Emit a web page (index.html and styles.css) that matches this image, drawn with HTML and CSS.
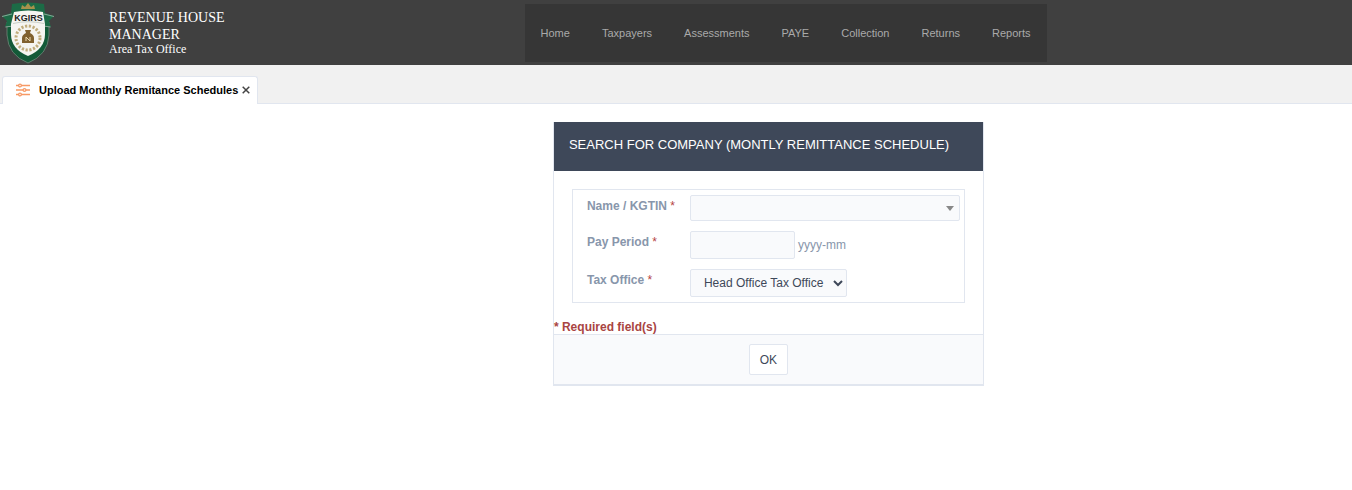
FILE: index.html
```html
<!DOCTYPE html>
<html lang="en">
<head>
<meta charset="utf-8">
<meta name="viewport" content="width=device-width, initial-scale=1">
<title>Upload Monthly Remitance Schedules</title>
<link rel="stylesheet" href="styles.css">
</head>
<body>
<header class="topbar">
  <div class="brand">
    <svg class="crest" viewBox="0 0 58 65" role="img" aria-label="KGIRS crest">
      <path d="M7 22 H49 V35 Q48 55 28 63 Q8 55 7 35Z" fill="#135a38" stroke="#71857a" stroke-width=".8"/>
      <path d="M12 4 Q28 1 44 4 L45 13 L54 16 L49 21 L51 27 L43 26 H13 L5 27 L7 21 L2 16 L11 13Z" fill="#1c6b46"/>
      <path d="M2 16.500 L12 14 M54 16.500 L44 14 M5.500 27 L13 26 M50.500 27 L43 26" stroke="#a5b8ad" stroke-width=".8"/>
      <path d="M14 12 Q28 9 43 12 L45 24 V34 Q45 49 28 56 Q11 49 11 34 V24Z" fill="#f5f5f1"/>
      <path d="M13 23.500 Q28 20 44 23.500" fill="none" stroke="#b5beb5" stroke-width=".7"/>
      <path d="M21 9 L22 5 L25 7 L28 3 L31 7 L34 5 L35 9Z" fill="#a8914c"/>
      <text class="crest-name" x="28.500" y="21" text-anchor="middle">KGIRS</text>
      <circle cx="28" cy="38" r="12" fill="none" stroke="#c0ac7c" stroke-width="3" stroke-dasharray="2.200 1.600"/>
      <path d="M25 30 H31 L30 33 Q34 35 34 38 V43 H22 V38 Q22 35 26 33Z" fill="#80612f"/>
      <path d="M26 41 V37 L30 41 V37" fill="none" stroke="#ead9ae" stroke-width="1"/>
    </svg>
    <div class="identity">
      <div class="role">REVENUE HOUSE MANAGER</div>
      <div class="office">Area Tax Office</div>
    </div>
  </div>
  <nav class="menu">
    <a href="#">Home</a>
    <a href="#">Taxpayers</a>
    <a href="#">Assessments</a>
    <a href="#">PAYE</a>
    <a href="#">Collection</a>
    <a href="#">Returns</a>
    <a href="#">Reports</a>
  </nav>
</header>
<div class="tabs">
  <div class="tab">
    <svg class="sliders" viewBox="0 0 14 14" aria-hidden="true">
      <path d="M0 2.500H2.500M5.500 2.500H14M0 7H7M10 7H14M0 11.500H2.500M5.500 11.500H14"/>
      <circle cx="4" cy="2.500" r="1.400"/><circle cx="8.500" cy="7" r="1.400"/><circle cx="4" cy="11.500" r="1.400"/>
    </svg>
    <span class="tab-title">Upload Monthly Remitance Schedules</span>
    <button class="close" type="button" aria-label="Close tab">
      <svg viewBox="0 0 8 8" aria-hidden="true"><path d="M.7 .7 7.3 7.3M7.3 .7 .7 7.3"/></svg>
    </button>
  </div>
</div>
<main class="content">
  <form class="card">
    <h1 class="card-title">SEARCH FOR COMPANY (MONTLY REMITTANCE SCHEDULE)</h1>
    <div class="fields">
      <div class="row">
        <label for="company">Name / KGTIN <span class="req">*</span></label>
        <span class="picker"><select id="company" class="control company"><option></option></select></span>
      </div>
      <div class="row">
        <label for="period">Pay Period <span class="req">*</span></label>
        <span class="period-box"><input id="period" class="control period" type="text"><span>yyyy-mm</span></span>
      </div>
      <div class="row">
        <label for="office">Tax Office <span class="req">*</span></label>
        <select id="office" class="control office-select"><option>Head Office Tax Office</option></select>
      </div>
    </div>
    <p class="note">* Required field(s)</p>
    <div class="actions"><button class="ok" type="button">OK</button></div>
  </form>
</main>
</body>
</html>
```
FILE: styles.css
```css
* { box-sizing: border-box; }
body {
  margin: 0;
  background: #fff;
  color: #8896ab;
  font: 12px/16px "Liberation Sans", Arial, sans-serif;
}
.topbar {
  display: grid;
  grid-template-columns: 38.8% auto;
  justify-content: start;
  align-items: center;
  height: 65px;
  background: #404040;
}
.brand { display: flex; align-items: center; gap: 51px; }
.crest { flex: none; width: 58px; height: 65px; }
.crest-name { font: bold 9px "Liberation Sans", Arial, sans-serif; fill: #222; }
.identity {
  width: 130px;
  color: #fff;
  font-family: "Liberation Serif", "Times New Roman", serif;
}
.role { font-size: 14px; line-height: 17px; }
.office { font-size: 12px; line-height: 13px; }
.menu { display: flex; background: #363636; }
.menu a {
  padding: 0 16px;
  color: #aaa;
  font-size: 11px;
  line-height: 58px;
  text-decoration: none;
}
.tabs {
  display: flex;
  padding: 11px 2px 0;
  border-bottom: 1px solid #e1e6ef;
  background: #f1f1f1;
}
.tab {
  display: flex;
  align-items: center;
  height: 28px;
  margin-bottom: -1px;
  padding: 0 7px 1px 13px;
  border: 1px solid #e1e6ef;
  border-bottom: 0;
  border-radius: 3px 3px 0 0;
  background: #fff;
}
.sliders { width: 14px; height: 14px; fill: none; stroke: #f79a66; stroke-width: 1.3; }
.tab-title { margin: 0 4px 0 9px; color: #000; font-size: 11px; font-weight: bold; }
.close { display: flex; padding: 0; border: 0; background: none; }
.close svg { width: 8px; height: 8px; stroke: #444; stroke-width: 1.5; }
.content { padding: 18px 0 0 40.9%; }
.card {
  width: 431px;
  max-width: 100%;
  border: 1px solid #e1e6ef;
  border-top: 0;
  border-bottom-width: 2px;
}
.card-title {
  margin: 0;
  padding: 13px 15px 16px;
  background: #3e4859;
  color: #fff;
  font-size: 13px;
  font-weight: normal;
  line-height: 20px;
  white-space: nowrap;
}
.fields {
  display: grid;
  gap: 10px;
  margin: 18px;
  padding: 5px 4px 5px 14px;
  border: 1px solid #e1e6ef;
}
.row { display: grid; grid-template-columns: 103px 1fr; }
.row label { padding-top: 3px; font-weight: bold; }
.req { color: #b5433f; font-weight: normal; }
.control {
  height: 28px;
  border: 1px solid #e1e6ef;
  border-radius: 2px;
  background: #f9fafc;
  color: #3e4859;
  font: inherit;
}
.picker { display: grid; align-items: center; }
.picker::after {
  content: "";
  grid-area: 1 / 1;
  justify-self: end;
  margin-right: 6px;
  border: 4px solid transparent;
  border-top: 5px solid #888;
  border-bottom: 0;
  pointer-events: none;
}
.company { grid-area: 1 / 1; width: 100%; height: 26px; appearance: none; }
.period-box { display: flex; align-items: center; gap: 3px; }
.period { width: 105px; }
.office-select { justify-self: start; width: 157px; padding: 0 0 0 9px; }
.note { margin: 0; color: #a94442; font-weight: bold; line-height: 13px; }
.actions {
  display: flex;
  justify-content: center;
  padding: 9px;
  border-top: 1px solid #e1e6ef;
  background: #f9fafc;
}
.ok {
  height: 31px;
  padding: 0 10px;
  border: 1px solid #e1e6ef;
  border-radius: 2px;
  background: #fff;
  color: #3e4859;
  font: inherit;
}
```
